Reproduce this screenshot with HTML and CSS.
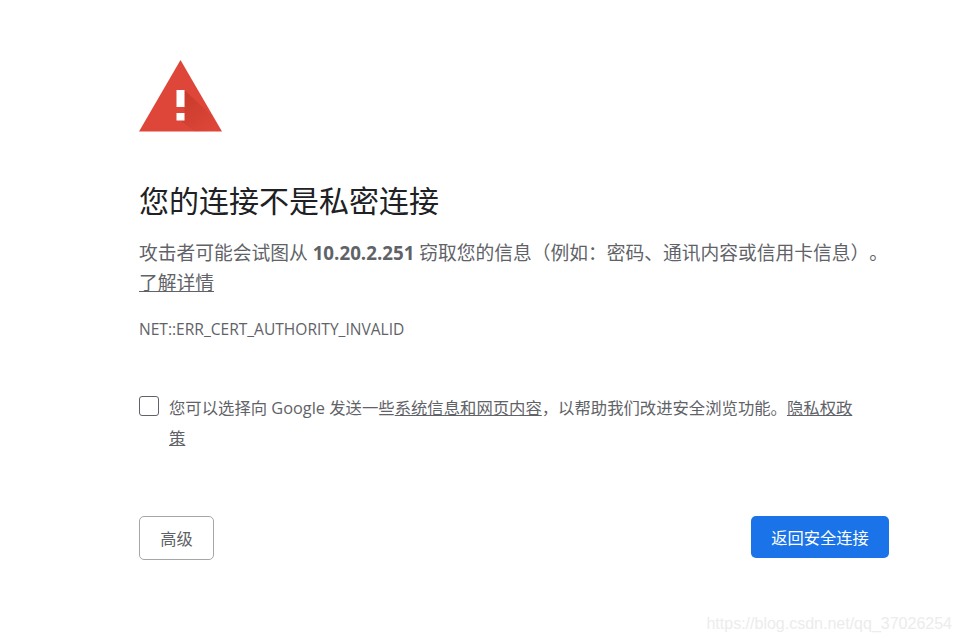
FILE: index.html
```html
<!DOCTYPE html>
<html lang="zh-CN">
<head>
    <meta charset="UTF-8">
    <title>隐私设置错误</title>
    <link rel="stylesheet" href="styles.css">
</head>
<body>
    <div class="mainDiv">
        <svg class="warnIcon" width="83" height="72" viewBox="0 0 83 72">
            <defs>
                <linearGradient id="warnShade" x1="0.1" y1="0.1" x2="0.8" y2="0.9">
                    <stop offset="0" stop-color="#b7321f" stop-opacity="0.55"/>
                    <stop offset="1" stop-color="#b7321f" stop-opacity="0"/>
                </linearGradient>
            </defs>
            <polygon points="41.5,0 83,71.5 0,71.5" fill="#dd4639"/>
            <polygon points="45.5,30 73,56 83,71.5 56,71.5 41,60.5 45.5,60.5" fill="url(#warnShade)"/>
            <rect x="37.5" y="30" width="8" height="17" fill="#fff"/>
            <rect x="37.5" y="53" width="8" height="7.5" fill="#fff"/>
        </svg>
        <h1>您的连接不是私密连接</h1>
        <p class="info">攻击者可能会试图从 <b>10.20.2.251</b> 窃取您的信息（例如：密码、通讯内容或信用卡信息）。<a href="#">了解详情</a></p>
        <p class="errCode">NET::ERR_CERT_AUTHORITY_INVALID</p>
        <div class="optIn">
            <span class="checkBox"></span>
            <p>您可以选择向 Google 发送一些<a href="#">系统信息和网页内容</a>，以帮助我们改进安全浏览功能。<a href="#">隐私权政</a><a href="#">策</a></p>
        </div>
        <div class="buttons">
            <button class="advanced">高级</button>
            <button class="goBack">返回安全连接</button>
        </div>
    </div>
    <div class="watermark">https://blog.csdn.net/qq_37026254</div>
</body>
</html>
```

FILE: styles.css
```css
* {
    box-sizing: border-box;
}

html, body {
    height: 100%;
}

body {
    margin: 0;
    background-color: #fff;
    color: #5f6368;
    font-family: "Open Sans", "Noto Sans CJK SC", sans-serif;
    text-spacing-trim: space-all;
    overflow: hidden;
}

.mainDiv {
    width: 750px;
    margin-left: 139px;
    padding-top: 60px;
}

.warnIcon {
    display: block;
}

h1 {
    margin: 49px 0 0;
    font-size: 30px;
    font-weight: 400;
    line-height: 40px;
    color: #202124;
}

.info {
    margin: 17px 0 0;
    font-size: 18.75px;
    line-height: 30px;
}

.info a {
    display: block;
    width: max-content;
}

a {
    color: #5f6368;
    text-decoration: underline;
}

.errCode {
    margin: 16px 0 0;
    font-size: 15.55px;
    line-height: 30px;
}

.optIn {
    display: flex;
    gap: 10px;
    margin-top: 49px;
}

.checkBox {
    flex: none;
    width: 20px;
    height: 20px;
    margin-top: 3px;
    border: 1px solid #5f6368;
    border-radius: 3px;
}

.optIn p {
    width: 695px;
    margin: 0;
    font-size: 16.35px;
    line-height: 30px;
}

.buttons {
    display: flex;
    justify-content: space-between;
    margin-top: 63px;
}

button {
    font-family: inherit;
    font-size: 16.25px;
    border-radius: 5px;
}

.advanced {
    width: 75px;
    height: 44px;
    padding: 0;
    border: 1px solid #a6a6a6;
    background-color: #fff;
    color: #5f6368;
}

.goBack {
    width: 138px;
    height: 42px;
    padding: 0;
    border: none;
    background-color: #1a73e8;
    color: #fff;
}

.watermark {
    position: absolute;
    right: 9px;
    bottom: 8px;
    font-family: "Liberation Sans", sans-serif;
    font-size: 16px;
    color: #ececec;
}
```
